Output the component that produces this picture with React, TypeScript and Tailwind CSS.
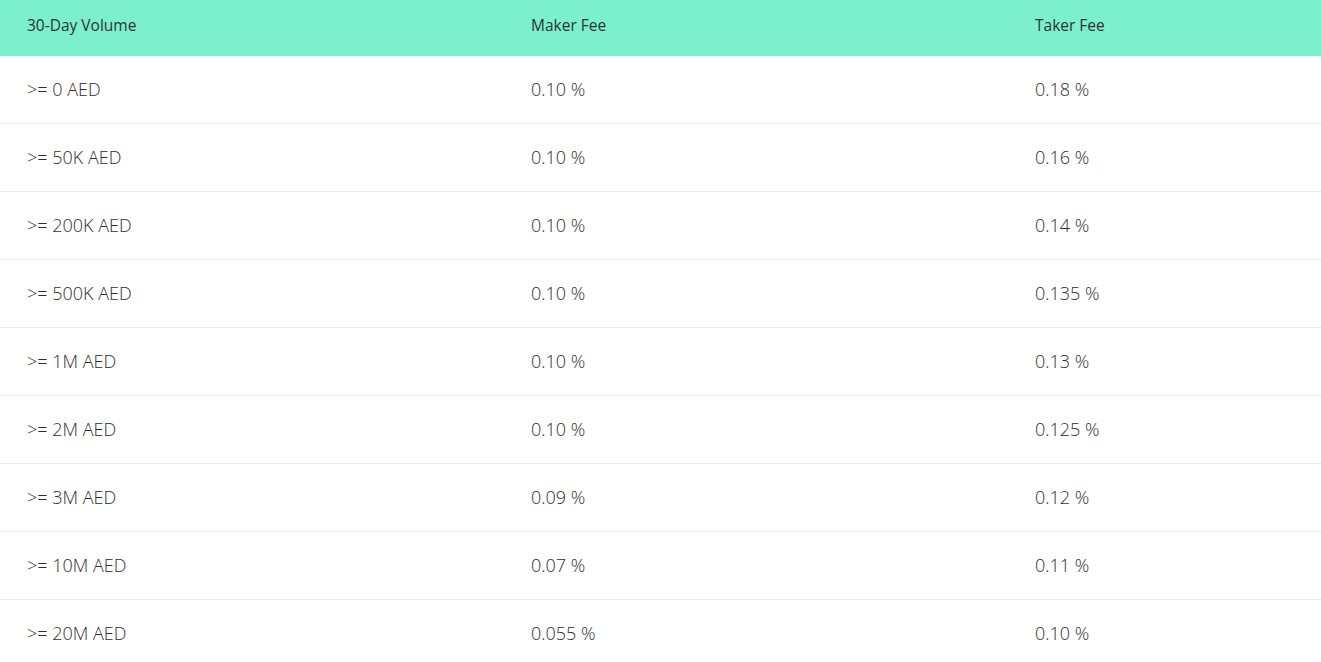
import React from "react";

const rows = [
  [">= 0 AED", "0.10 %", "0.18 %"],
  [">= 50K AED", "0.10 %", "0.16 %"],
  [">= 200K AED", "0.10 %", "0.14 %"],
  [">= 500K AED", "0.10 %", "0.135 %"],
  [">= 1M AED", "0.10 %", "0.13 %"],
  [">= 2M AED", "0.10 %", "0.125 %"],
  [">= 3M AED", "0.09 %", "0.12 %"],
  [">= 10M AED", "0.07 %", "0.11 %"],
  [">= 20M AED", "0.055 %", "0.10 %"],
];

function App() {
  return (
    <div className="w-full bg-white font-['Open_Sans',sans-serif]">
      <div className="grid grid-cols-[504px_504px_1fr] h-[56px] items-center pb-[5px] bg-[#7cefcd] text-[15.5px] font-medium text-[#2a3532]">
        <div className="pl-[27px]">30-Day Volume</div>
        <div className="pl-[27px]">Maker Fee</div>
        <div className="pl-[27px]">Taker Fee</div>
      </div>
      {rows.map((r, i) => (
        <div
          key={i}
          className="grid grid-cols-[504px_504px_1fr] h-[68px] items-center border-b border-[#ececec] text-[18px] font-light text-[#2e2e2e]"
        >
          {r.map((c, j) => (
            <div key={j} className="pl-[27px]">
              {c}
            </div>
          ))}
        </div>
      ))}
    </div>
  );
}

export default App;
